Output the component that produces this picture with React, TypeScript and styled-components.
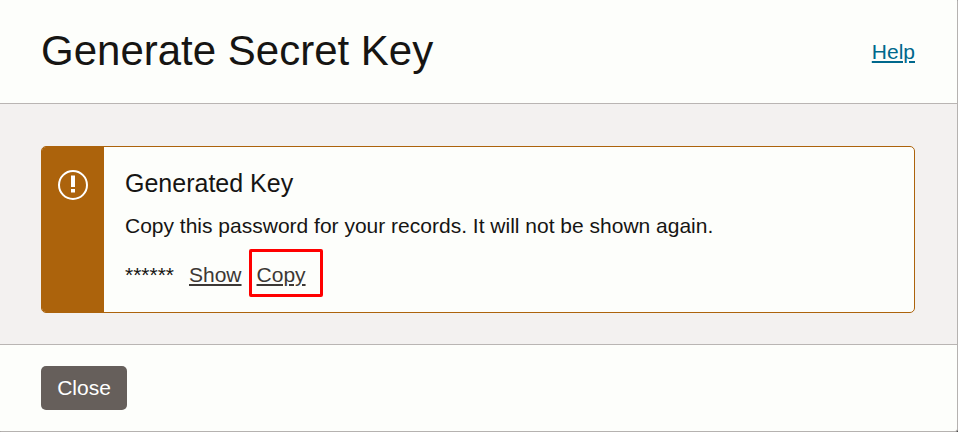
import React from "react";
import styled, { createGlobalStyle } from "styled-components";

const Global = createGlobalStyle`
  * { box-sizing: border-box; }
  body { margin: 0; font-family: "Liberation Sans", Arial, sans-serif; color: #161513; background: #333; }
  h1, h2, p { margin: 0; font-weight: 400; }
`;
const Dialog = styled.div`
  width: 958px; height: 432px; display: flex; flex-direction: column;
  background: #fdfefb; border-right: 1px solid #b5b2b0; border-bottom: 1px solid #b5b2b0;
  border-radius: 0 1px 3px 1px; border-bottom-right-radius: 3px;
  overflow: hidden; white-space: nowrap;
`;
const Header = styled.header`
  height: 104px; flex: none; padding: 0 42px 2px 41px; display: flex; align-items: center;
  justify-content: space-between; border-bottom: 1px solid #b9b5b3;
`;
const Title = styled.h1`font-size: 42px; line-height: 50px;`;
const Link = styled.a<{ $tone: string }>`
  color: ${(p) => p.$tone}; font-size: 21px; line-height: 28px; text-decoration: underline;
  text-decoration-thickness: 2px; text-underline-offset: 2px; cursor: pointer;
`;
const HelpLink = styled(Link)`margin-top: 2px;`;
const Body = styled.main`
  height: 241px; flex: none; padding: 42px 42px 31px 41px; background: #f3f1f0; border-bottom: 1px solid #b9b5b3;
`;
const Alert = styled.section`
  height: 167px; display: flex; border: 1px solid #ac630c; border-radius: 5px; background: #fdfefb; overflow: hidden;
`;
const Stripe = styled.div`
  width: 62px; flex: none; display: flex; justify-content: center; padding-top: 22px; background: #ac630c;
`;
const Content = styled.div`padding: 21px 21px 0;`;
const Heading = styled.h2`font-size: 25px; line-height: 30px;`;
const Message = styled.p`margin-top: 14px; font-size: 21px; line-height: 28px;`;
const KeyRow = styled.div`display: flex; align-items: center; margin-top: 9px; height: 48px;`;
const Mask = styled.span`width: 64px; padding-top: 4px; font-size: 21px; line-height: 28px;`;
const ShowLink = styled(Link)`padding-top: 4px;`;
const CopyLink = styled(Link)`padding-top: 4px;`;
const Highlight = styled.div`
  width: 74px; height: 48px; margin-left: 7px; padding-left: 5px; display: flex; align-items: center;
  border: 3px solid #ff0000; border-radius: 2px;
`;
const Footer = styled.footer`flex: 1; padding: 21px 41px;`;
const Close = styled.button`
  width: 86px; height: 44px; padding: 0; border: 0; border-radius: 5px; background: #665f5b;
  color: #fff; font: 21px "Liberation Sans", Arial, sans-serif;
`;

export default function App() {
  return (
    <Dialog>
      <Global />
      <Header><Title>Generate Secret Key</Title><HelpLink $tone="#00688c">Help</HelpLink></Header>
      <Body>
        <Alert>
          <Stripe>
            <svg width="32" height="32" viewBox="0 0 32 32" fill="none">
              <circle cx="16" cy="16" r="14" stroke="#fff" strokeWidth="2" />
              <path d="M14 6.5h4v11.5h-4zM14 20h4v3.5h-4z" fill="#fff" />
            </svg>
          </Stripe>
          <Content>
            <Heading>Generated Key</Heading>
            <Message>Copy this password for your records. It will not be shown again.</Message>
            <KeyRow>
              <Mask>******</Mask><ShowLink $tone="#3c3835">Show</ShowLink>
              <Highlight><CopyLink $tone="#3c3835">Copy</CopyLink></Highlight>
            </KeyRow>
          </Content>
        </Alert>
      </Body>
      <Footer><Close>Close</Close></Footer>
    </Dialog>
  );
}
